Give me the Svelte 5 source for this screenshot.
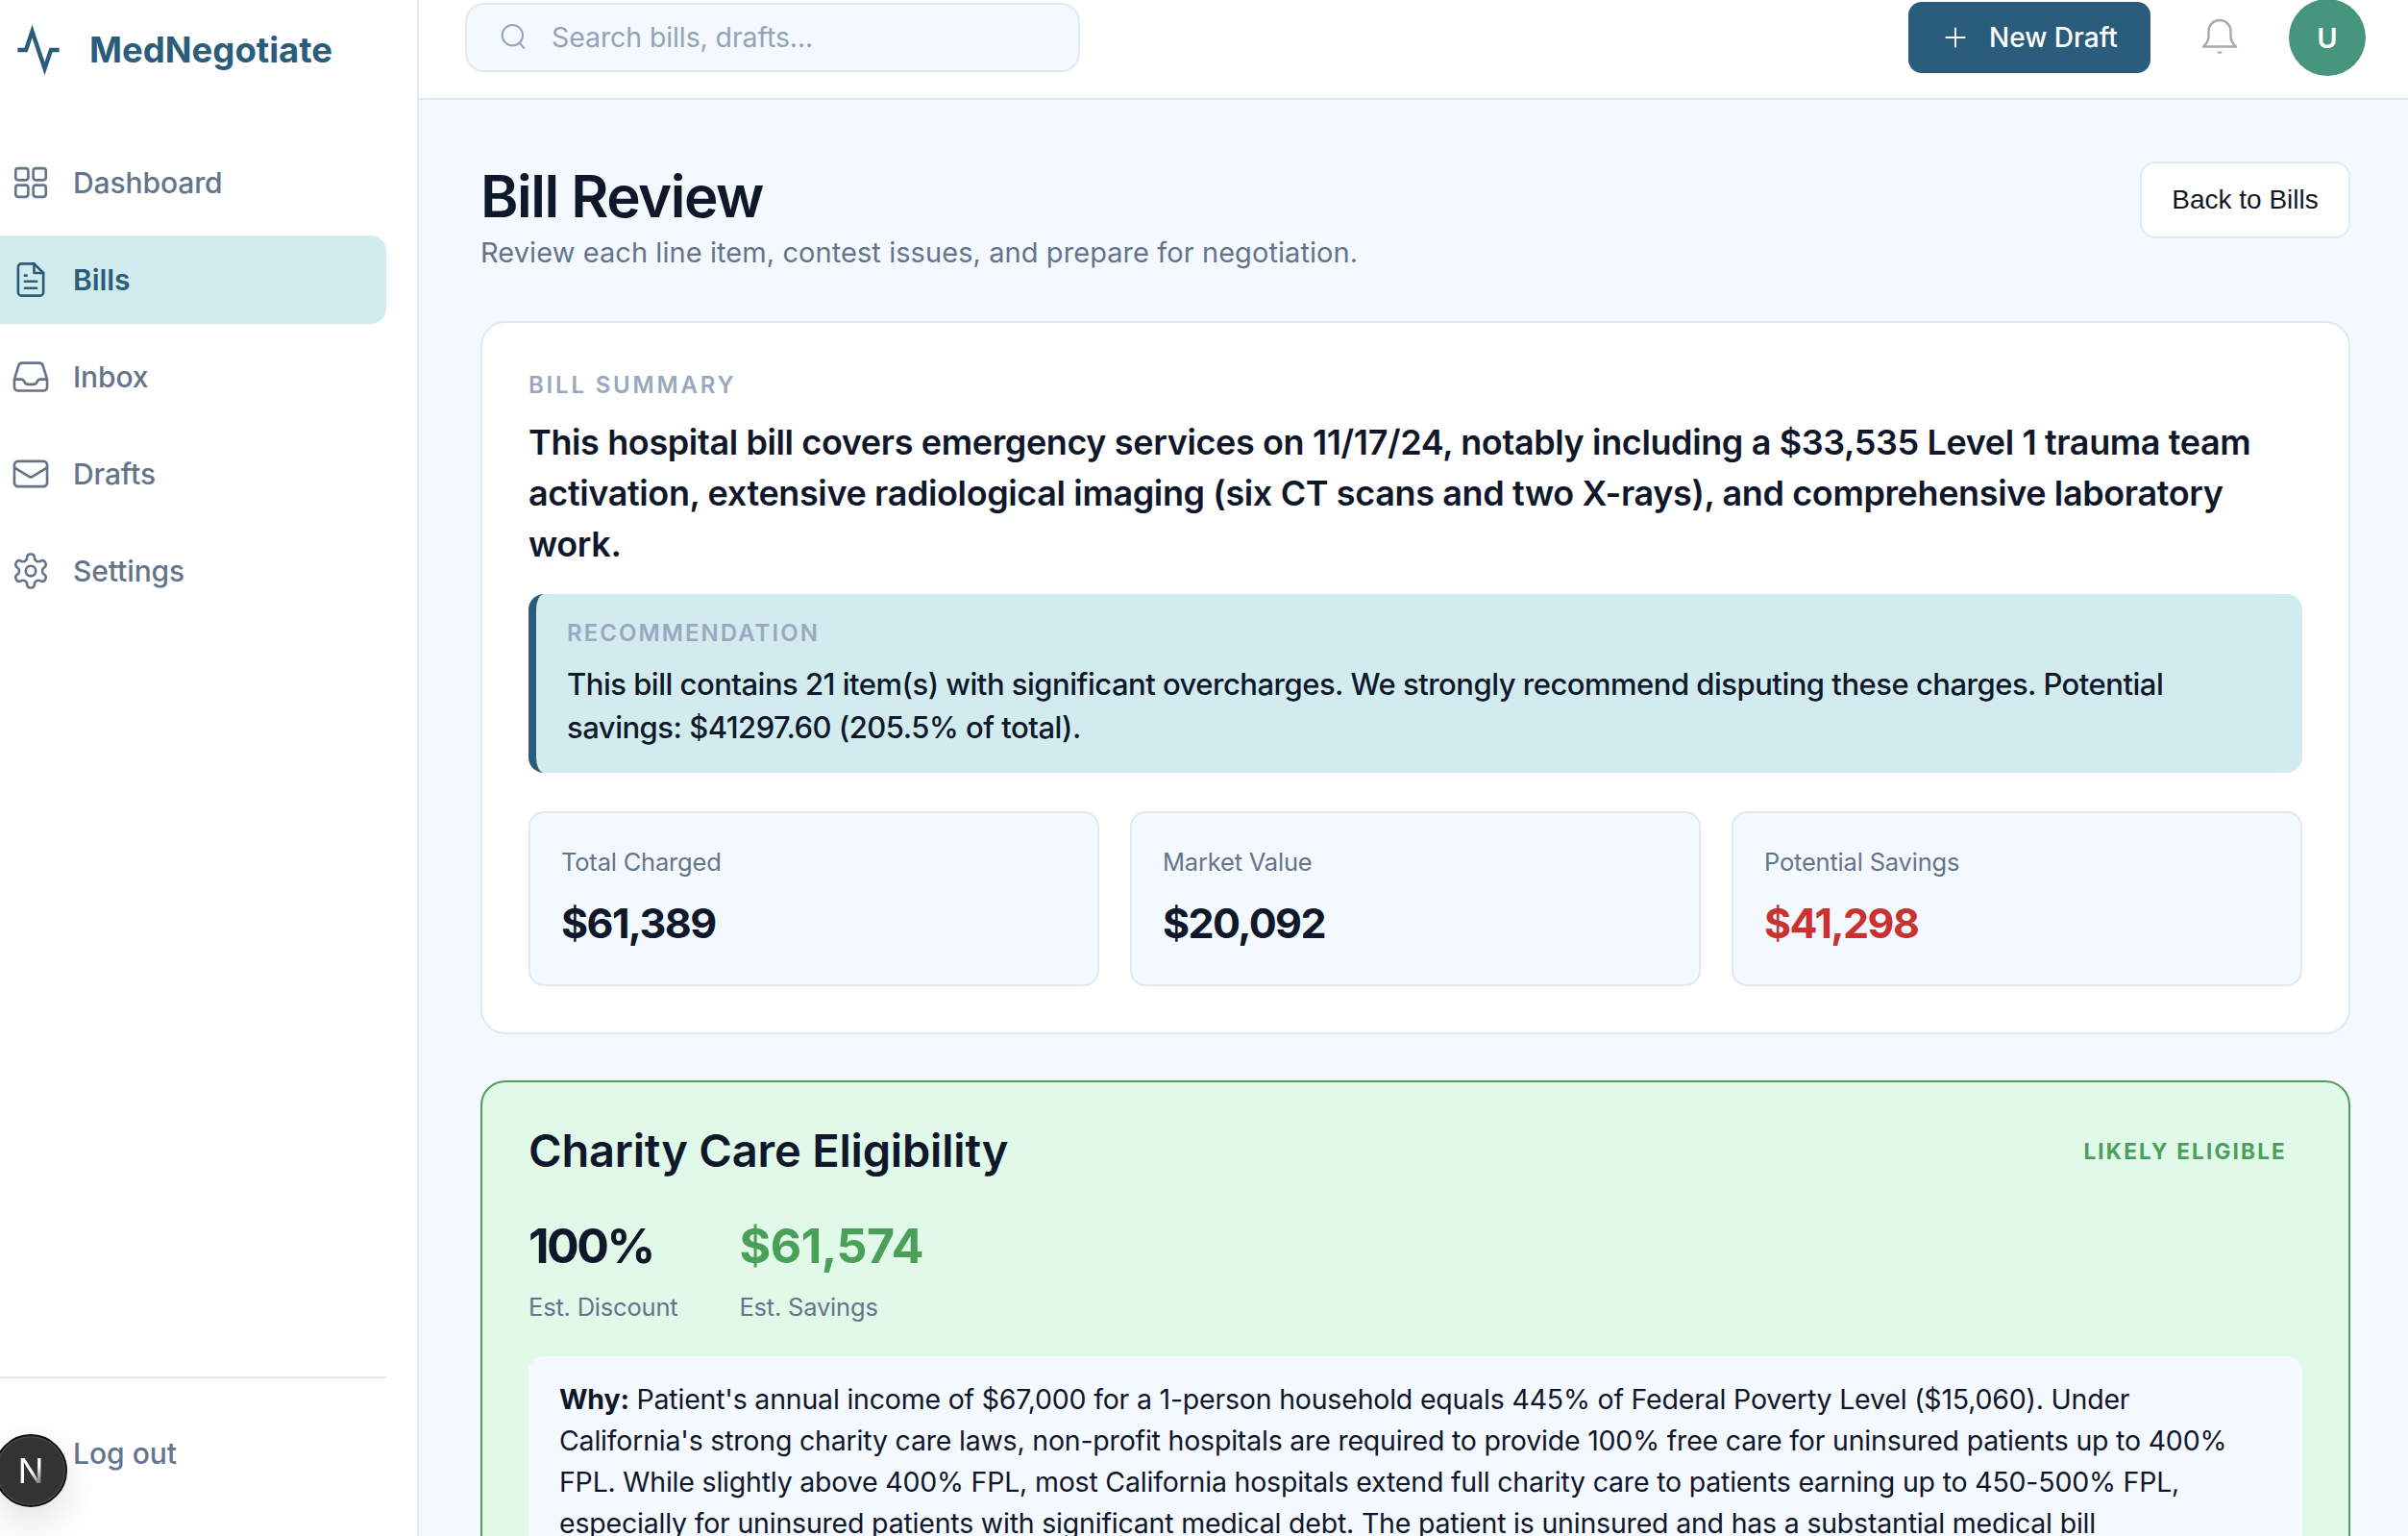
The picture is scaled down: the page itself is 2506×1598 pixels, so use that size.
<script>
  const nav = [
    { label: 'Dashboard', icon: 'grid' },
    { label: 'Bills', icon: 'file', active: true },
    { label: 'Inbox', icon: 'inbox' },
    { label: 'Drafts', icon: 'mail' },
    { label: 'Settings', icon: 'cog' }
  ];

  const stats = [
    { label: 'Total Charged', value: '$61,389' },
    { label: 'Market Value', value: '$20,092' },
    { label: 'Potential Savings', value: '$41,298', danger: true }
  ];
</script>

<div class="shell">
  <aside class="sidebar">
    <div class="brand">
      <svg class="brand-icon" viewBox="0 0 24 24" fill="none" stroke="currentColor" stroke-width="2" stroke-linecap="butt" stroke-linejoin="miter">
        <polyline points="22 12 18 12 15 21 9 3 6 12 2 12" />
      </svg>
      <span>MedNegotiate</span>
    </div>

    <nav class="nav">
      {#each nav as item}
        <a class="nav-item" class:active={item.active} href="#{item.label}">
          <svg class="nav-icon" viewBox="0 0 24 24" fill="none" stroke="currentColor" stroke-width="1.5" stroke-linecap="round" stroke-linejoin="round">
            {#if item.icon === 'grid'}
              <rect x="3" y="3.5" width="7.5" height="7" rx="1.6" />
              <rect x="13.5" y="3.5" width="7.5" height="7" rx="1.6" />
              <rect x="3" y="13.5" width="7.5" height="7" rx="1.6" />
              <rect x="13.5" y="13.5" width="7.5" height="7" rx="1.6" />
            {:else if item.icon === 'file'}
              <path d="M14 2.5H6.5a2 2 0 0 0-2 2v15a2 2 0 0 0 2 2h11a2 2 0 0 0 2-2V8z" />
              <path d="M14 2.5V8h5.5M15.5 13h-7M15.5 17h-7M9.5 9.5h-1" />
            {:else if item.icon === 'inbox'}
              <path d="M2.25 13.5h3.86a2.25 2.25 0 0 1 2.012 1.244l.256.512a2.25 2.25 0 0 0 2.013 1.244h3.218a2.25 2.25 0 0 0 2.013-1.244l.256-.512a2.25 2.25 0 0 1 2.013-1.244h3.859m-19.5.338V18a2.25 2.25 0 0 0 2.25 2.25h15A2.25 2.25 0 0 0 21.75 18v-4.162c0-.224-.034-.447-.1-.661L19.24 5.338a2.25 2.25 0 0 0-2.15-1.588H6.911a2.25 2.25 0 0 0-2.15 1.588L2.35 13.177a2.25 2.25 0 0 0-.1.661Z" />
            {:else if item.icon === 'mail'}
              <path d="M21.75 6.75v10.5a2.25 2.25 0 0 1-2.25 2.25h-15a2.25 2.25 0 0 1-2.25-2.25V6.75m19.5 0A2.25 2.25 0 0 0 19.5 4.5h-15a2.25 2.25 0 0 0-2.25 2.25m19.5 0v.243a2.25 2.25 0 0 1-1.07 1.916l-7.5 4.615a2.25 2.25 0 0 1-2.36 0L3.32 8.91a2.25 2.25 0 0 1-1.07-1.916V6.75" />
            {:else}
              <path d="M12.22 2h-.44a2 2 0 0 0-2 2v.18a2 2 0 0 1-1 1.73l-.43.25a2 2 0 0 1-2 0l-.15-.08a2 2 0 0 0-2.73.73l-.22.38a2 2 0 0 0 .73 2.73l.15.1a2 2 0 0 1 1 1.72v.51a2 2 0 0 1-1 1.74l-.15.09a2 2 0 0 0-.73 2.73l.22.38a2 2 0 0 0 2.73.73l.15-.08a2 2 0 0 1 2 0l.43.25a2 2 0 0 1 1 1.73V20a2 2 0 0 0 2 2h.44a2 2 0 0 0 2-2v-.18a2 2 0 0 1 1-1.73l.43-.25a2 2 0 0 1 2 0l.15.08a2 2 0 0 0 2.73-.73l.22-.39a2 2 0 0 0-.73-2.73l-.15-.08a2 2 0 0 1-1-1.74v-.5a2 2 0 0 1 1-1.74l.15-.09a2 2 0 0 0 .73-2.73l-.22-.38a2 2 0 0 0-2.73-.73l-.15.08a2 2 0 0 1-2 0l-.43-.25a2 2 0 0 1-1-1.73V4a2 2 0 0 0-2-2z" />
              <circle cx="12" cy="12" r="3" />
            {/if}
          </svg>
          <span>{item.label}</span>
        </a>
      {/each}
    </nav>

    <div class="sidebar-foot">
      <a class="logout" href="#logout">Log out</a>
    </div>

    <div class="dev-badge">
      <span class="dev-n">N</span>
    </div>
  </aside>

  <div class="column">
    <header class="topbar">
      <div class="search">
        <svg class="search-icon" viewBox="0 0 24 24" fill="none" stroke="currentColor" stroke-width="1.5" stroke-linecap="round">
          <circle cx="11.5" cy="11" r="8" />
          <path d="M17.5 17.5l3 3.5" />
        </svg>
        <span>Search bills, drafts...</span>
      </div>
      <div class="top-actions">
        <button type="button" class="btn-primary">
          <svg class="plus" viewBox="0 0 24 24" fill="none" stroke="currentColor" stroke-width="2" stroke-linecap="round">
            <path d="M12 1.5v21M1.5 12h21" />
          </svg>
          New Draft
        </button>
        <svg class="bell" viewBox="0 0 24 24" fill="none" stroke="currentColor" stroke-width="1.3" stroke-linejoin="round">
          <path d="M12 2.6a6 6 0 0 0-6 6v2.5c0 2.5-1 4.3-2.9 5.9h17.8c-1.9-1.6-2.9-3.4-2.9-5.9V8.6a6 6 0 0 0-6-6z" />
          <path d="M10.6 19.6a1.4 1.2 0 0 0 2.8 0z" fill="currentColor" stroke="none" />
        </svg>
        <div class="avatar">U</div>
      </div>
    </header>

    <main class="main">
      <div class="page-head">
        <div>
          <h1>Bill Review</h1>
          <p class="subtitle">Review each line item, contest issues, and prepare for negotiation.</p>
        </div>
        <button type="button" class="btn-back">Back to Bills</button>
      </div>

      <section class="card">
        <div class="eyebrow">BILL SUMMARY</div>
        <p class="summary">This hospital bill covers emergency services on 11/17/24, notably including a $33,535 Level 1 trauma team activation, extensive radiological imaging (six CT scans and two X-rays), and comprehensive laboratory work.</p>

        <div class="recommend">
          <div class="eyebrow tight">RECOMMENDATION</div>
          <p>This bill contains 21 item(s) with significant overcharges. We strongly recommend disputing these charges. Potential savings: $41297.60 (205.5% of total).</p>
        </div>

        <div class="stats">
          {#each stats as stat}
            <div class="stat">
              <div class="stat-label">{stat.label}</div>
              <div class="stat-value" class:danger={stat.danger}>{stat.value}</div>
            </div>
          {/each}
        </div>
      </section>

      <section class="charity">
        <div class="charity-head">
          <h2>Charity Care Eligibility</h2>
          <span class="badge">LIKELY ELIGIBLE</span>
        </div>
        <div class="charity-stats">
          <div>
            <div class="big percent">100%</div>
            <div class="big-label">Est. Discount</div>
          </div>
          <div>
            <div class="big green">$61,574</div>
            <div class="big-label">Est. Savings</div>
          </div>
        </div>
        <div class="why">
          <strong>Why:</strong> Patient's annual income of $67,000 for a 1-person household equals 445% of Federal Poverty Level ($15,060). Under California's strong charity care laws, non-profit hospitals are required to provide 100% free care for uninsured patients up to 400% FPL. While slightly above 400% FPL, most California hospitals extend full charity care to patients earning up to 450-500% FPL, especially for uninsured patients with significant medical debt. The patient is uninsured and has a substantial medical bill
        </div>
      </section>
    </main>
  </div>
</div>

<style>
  :global(body) {
    margin: 0;
    background: #f4f8ff;
  }

  .shell {
    display: grid;
    grid-template-columns: 436px 1fr;
    grid-template-rows: 1598px;
    height: 1598px;
    overflow: hidden;
    font-family: Inter, "Liberation Sans", sans-serif;
    color: #0f172a;
  }

  .sidebar {
    position: relative;
    display: flex;
    flex-direction: column;
    background: #fff;
    border-right: 2px solid #e2e8f0;
  }

  .brand {
    display: flex;
    align-items: center;
    gap: 27px;
    height: 104px;
    padding-left: 14px;
    color: #2a5d7c;
    font-size: 36.5px;
    font-weight: 700;
  }

  .brand-icon {
    width: 52px;
    height: 52px;
    flex: none;
  }

  .nav {
    display: flex;
    flex-direction: column;
    gap: 9px;
    margin-top: 40px;
    width: 402px;
  }

  .nav-item {
    display: flex;
    align-items: center;
    gap: 23px;
    height: 92px;
    padding-left: 11px;
    border-radius: 0 16px 16px 0;
    color: #64748b;
    font-size: 30px;
    font-weight: 500;
    letter-spacing: -0.1px;
    text-decoration: none;
  }

  .nav-item.active {
    background: #d1ebef;
    color: #2a5d7c;
    font-weight: 600;
  }

  .nav-icon {
    width: 42px;
    height: 42px;
    flex: none;
  }

  .sidebar-foot {
    margin-top: auto;
    width: 402px;
    height: 166px;
    box-sizing: border-box;
    border-top: 2px solid #e2e8f0;
    padding: 58px 0 0 76px;
  }

  .logout {
    display: block;
    color: #64748b;
    font-size: 30px;
    font-weight: 500;
    line-height: 40px;
    text-decoration: none;
  }

  .dev-badge {
    position: absolute;
    left: -6px;
    top: 1492px;
    width: 76px;
    height: 76px;
    box-sizing: border-box;
    display: flex;
    align-items: center;
    justify-content: center;
    border-radius: 50%;
    background: #333;
    border: 2px solid #111;
    box-shadow: 0 0 0 1px #555 inset, 0 16px 40px rgba(0, 0, 0, 0.12);
  }

  .dev-n {
    font-size: 36px;
    font-weight: 400;
    background: linear-gradient(135deg, #fff 55%, rgba(255, 255, 255, 0.1) 90%);
    -webkit-background-clip: text;
    background-clip: text;
    color: transparent;
  }

  .column {
    min-width: 0;
    min-height: 0;
    overflow: hidden;
    display: flex;
    flex-direction: column;
  }

  .topbar {
    flex: none;
    display: flex;
    align-items: center;
    justify-content: space-between;
    height: 104px;
    box-sizing: border-box;
    padding: 0 44px 24px 48px;
    background: #fff;
    border-bottom: 2px solid #e2e8f0;
  }

  .search {
    display: flex;
    align-items: center;
    gap: 24px;
    width: 640px;
    height: 72px;
    box-sizing: border-box;
    padding: 0 0 2px 32px;
    background: #f4f8ff;
    border: 2px solid #e2e8f0;
    border-radius: 20px;
    color: #94a3b8;
    font-size: 28.5px;
    letter-spacing: -0.1px;
  }

  .search-icon {
    width: 32px;
    height: 32px;
    flex: none;
  }

  .top-actions {
    display: flex;
    align-items: center;
    gap: 49px;
  }

  .btn-primary {
    display: flex;
    align-items: center;
    gap: 24px;
    width: 252px;
    height: 74px;
    box-sizing: border-box;
    padding: 0 0 0 38px;
    border: none;
    border-radius: 14px;
    background: #2a5d7c;
    color: #fff;
    font-family: inherit;
    font-size: 28px;
    font-weight: 500;
  }

  .plus {
    width: 22px;
    height: 22px;
  }

  .bell {
    width: 46px;
    height: 46px;
    color: #a9a9b6;
  }

  .avatar {
    width: 80px;
    height: 80px;
    display: flex;
    align-items: center;
    justify-content: center;
    border-radius: 50%;
    background: #47957d;
    color: #fff;
    font-size: 29px;
    font-weight: 600;
  }

  .main {
    padding: 64px 60px 0 64px;
  }

  .page-head {
    display: flex;
    justify-content: space-between;
    align-items: flex-start;
    margin-bottom: 49px;
  }

  h1 {
    margin: 1px 0 0;
    font-size: 60px;
    font-weight: 600;
    line-height: 70px;
    letter-spacing: -1.5px;
  }

  .subtitle {
    margin: 1px 0 0;
    color: #64748b;
    font-size: 29px;
    line-height: 45px;
    letter-spacing: 0.07px;
  }

  .btn-back {
    width: 219px;
    height: 80px;
    border: 2px solid #e2e8f0;
    border-radius: 16px;
    background: #fff;
    color: #0f172a;
    font-family: "Liberation Sans", Arial, sans-serif;
    font-size: 28px;
    font-weight: 400;
  }

  .card {
    background: #fff;
    border: 2px solid #e2e8f0;
    border-radius: 26px;
    padding: 49px 48px 48px;
  }

  .eyebrow {
    color: #9aa8bd;
    font-size: 24px;
    font-weight: 600;
    line-height: 32px;
    letter-spacing: 2.8px;
  }

  .eyebrow.tight {
    letter-spacing: 2.05px;
  }

  .summary {
    margin: 17px 0 25px;
    font-size: 36px;
    font-weight: 600;
    line-height: 53px;
    letter-spacing: -0.38px;
  }

  .recommend {
    padding: 25px 40px 25px 32px;
    background: #d1ebef;
    border-left: 8px solid #2a5d7c;
    border-radius: 16px;
  }

  .recommend p {
    margin: 14px 0 0;
    font-size: 31px;
    font-weight: 500;
    line-height: 45px;
    letter-spacing: -0.5px;
  }

  .stats {
    display: grid;
    grid-template-columns: repeat(3, 1fr);
    gap: 32px;
    margin-top: 40px;
  }

  .stat {
    height: 182px;
    box-sizing: border-box;
    padding: 32px 32px 0;
    background: #f4f8ff;
    border: 2px solid #e2e8f0;
    border-radius: 16px;
  }

  .stat-label {
    color: #64748b;
    font-size: 25.5px;
    line-height: 38px;
    letter-spacing: -0.2px;
  }

  .stat-value {
    margin-top: 14px;
    font-size: 43px;
    font-weight: 700;
    line-height: 60px;
    letter-spacing: -1.6px;
  }

  .stat-value.danger {
    color: #c9322f;
  }

  .charity {
    margin-top: 48px;
    background: #e1f9e8;
    border: 2px solid #4aa058;
    border-radius: 26px;
    padding: 49px 48px;
  }

  .charity-head {
    display: flex;
    justify-content: space-between;
    align-items: center;
    padding-right: 16px;
  }

  h2 {
    margin: 0;
    font-size: 47px;
    font-weight: 600;
    line-height: 44px;
    letter-spacing: -0.2px;
  }

  .badge {
    color: #4aa058;
    font-size: 22.5px;
    font-weight: 700;
    letter-spacing: 2.2px;
  }

  .charity-stats {
    display: flex;
    gap: 64px;
    margin-top: 46px;
  }

  .big {
    font-size: 50px;
    font-weight: 700;
    line-height: 62px;
    letter-spacing: -0.5px;
  }

  .big.percent {
    letter-spacing: -2.5px;
  }

  .big.green {
    color: #4aa058;
  }

  .big-label {
    margin-top: 14px;
    color: #64748b;
    font-size: 25.5px;
    line-height: 38px;
    letter-spacing: -0.2px;
  }

  .why {
    margin-top: 32px;
    padding: 23px 32px;
    background: #f4f8ff;
    border-radius: 16px;
    font-size: 28.5px;
    line-height: 43px;
    letter-spacing: -0.2px;
  }

  .why strong {
    font-weight: 700;
  }
</style>
